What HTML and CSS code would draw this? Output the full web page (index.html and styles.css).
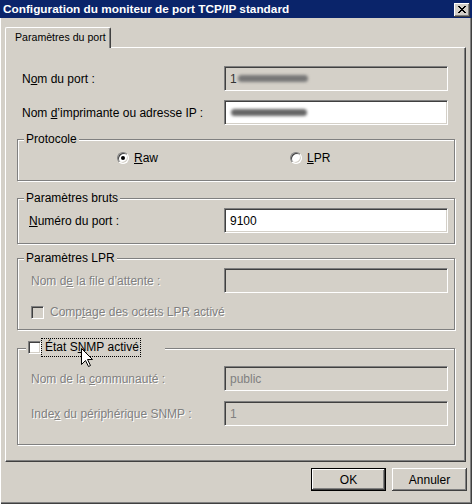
FILE: index.html
```html
<!DOCTYPE html>
<html lang="fr">
<head>
<meta charset="utf-8">
<title>Configuration du moniteur de port TCP/IP standard</title>
<link rel="stylesheet" href="styles.css">
</head>
<body>
<div class="window">
  <div class="titlebar">
    <span class="title">Configuration du moniteur de port TCP/IP standard</span>
    <span class="close">
      <svg width="8" height="7" viewBox="0 0 8 7" shape-rendering="crispEdges">
        <rect x="0" y="0" width="2" height="1"/><rect x="6" y="0" width="2" height="1"/>
        <rect x="1" y="1" width="2" height="1"/><rect x="5" y="1" width="2" height="1"/>
        <rect x="2" y="2" width="4" height="1"/>
        <rect x="3" y="3" width="2" height="1"/>
        <rect x="2" y="4" width="4" height="1"/>
        <rect x="1" y="5" width="2" height="1"/><rect x="5" y="5" width="2" height="1"/>
        <rect x="0" y="6" width="2" height="1"/><rect x="6" y="6" width="2" height="1"/>
      </svg>
    </span>
  </div>
  <div class="client">
    <div class="tabs"><div class="tab">Paramètres du port</div></div>
    <div class="panel">
      <div class="prow r1">
        <span class="lbl">N<u>o</u>m du port :</span>
        <div class="field off"><span class="val dark">1</span><span class="blur"></span></div>
      </div>
      <div class="prow r2">
        <span class="lbl">Nom <u>d</u>’imprimante ou adresse IP :</span>
        <div class="field"><span class="blur wide"></span></div>
      </div>

      <div class="group g-proto">
        <span class="cap">Protocole</span>
        <div class="radios">
          <div class="opt raw"><span class="radio on"></span><span><u>R</u>aw</span></div>
          <div class="opt"><span class="radio"></span><span><u>L</u>PR</span></div>
        </div>
      </div>

      <div class="group g-bruts">
        <span class="cap">Paramètres bruts</span>
        <div class="grow gb">
          <span class="lbl"><u>N</u>uméro du port :</span>
          <div class="field"><span class="val">9100</span></div>
        </div>
      </div>

      <div class="group g-lpr">
        <span class="cap">Paramètres LPR</span>
        <div class="grow gl">
          <span class="lbl dis">Nom d<u>e</u> la file d’attente :</span>
          <div class="field off"></div>
        </div>
        <div class="chkrow">
          <span class="chk off"></span><span class="dis">Comp<u>t</u>age des octets LPR activé</span>
        </div>
      </div>

      <div class="group g-snmp">
        <div class="cap snmpcap">
          <span class="chk"></span><span class="focus">État S<u>N</u>MP activé</span>
        </div>
        <div class="grow gs1">
          <span class="lbl dis">Nom de la <u>c</u>ommunauté :</span>
          <div class="field off"><span class="val">public</span></div>
        </div>
        <div class="grow gs2">
          <span class="lbl dis">Inde<u>x</u> du périphérique SNMP :</span>
          <div class="field off"><span class="val">1</span></div>
        </div>
      </div>
    </div>
    <div class="buttons">
      <button class="btn default">OK</button>
      <button class="btn">Annuler</button>
    </div>
  </div>
  <svg class="cursor" width="13" height="20" viewBox="0 0 13 20">
    <path d="M0.5 0.5 L0.5 16.5 L4.5 12.5 L7.5 18.5 L9.5 17.5 L6.5 11.5 L11.5 11.5 Z" fill="#fff" stroke="#000" stroke-width="1" stroke-linejoin="miter"/>
  </svg>
</div>
</body>
</html>
```
FILE: styles.css
```css
* { box-sizing: border-box; }
html, body { margin: 0; padding: 0; }
body {
  font-family: "Liberation Sans", Arial, sans-serif;
  font-size: 12px;
  color: #000;
  background: #d4d0c8;
}
u { text-decoration: underline; text-underline-offset: 1px; }

.window {
  position: relative;
  width: 472px;
  height: 504px;
  background: #d4d0c8;
  display: flex;
  flex-direction: column;
  overflow: hidden;
  box-shadow: inset 1px 0 #ffffff, inset -1px -1px #404040, inset -2px -2px #808080;
}

.titlebar {
  flex: none;
  height: 18px;
  background: #0a246a;
  color: #fff;
  display: flex;
  justify-content: space-between;
  align-items: flex-start;
}
.title {
  font-weight: bold;
  font-size: 11.8px;
  line-height: 18px;
  padding-left: 3px;
  white-space: nowrap;
}
.close {
  width: 16px;
  height: 14px;
  margin: 3px 2px 0 0;
  background: #d4d0c8;
  box-shadow: inset -1px -1px #404040, inset 1px 1px #ffffff, inset -2px -2px #808080;
  display: flex;
  align-items: center;
  justify-content: center;
  padding: 0 0 1px 0;
}
.close svg { display: block; fill: #000; }

.client {
  flex: 1;
  display: flex;
  flex-direction: column;
  padding: 9px 0 0 5px;
}
.tabs { height: 20px; display: flex; }
.tab {
  position: relative;
  z-index: 1;
  width: 106px;
  height: 21px;
  margin-bottom: -1px;
  background: #d4d0c8;
  border-top: 1px solid #fff;
  border-left: 1px solid #fff;
  border-right: 1px solid #404040;
  border-top-left-radius: 2px;
  border-top-right-radius: 2px;
  box-shadow: inset -1px 0 #808080;
  padding-left: 9px;
  font-size: 10.6px;
  line-height: 18px;
  white-space: nowrap;
}

.panel {
  width: 461px;
  height: 415px;
  border-top: 1px solid #fff;
  border-left: 1px solid #fff;
  border-right: 1px solid #404040;
  border-bottom: 1px solid #404040;
  box-shadow: inset -1px -1px #808080;
  display: flex;
  flex-direction: column;
}

.prow, .grow {
  display: flex;
  align-items: center;
  justify-content: space-between;
}
.prow { margin: 0 17px 0 16px; }
.prow.r1 { margin-top: 18px; }
.prow.r2 { margin-top: 9px; }
.lbl { white-space: nowrap; }

.field {
  flex: none;
  width: 224px;
  height: 25px;
  border: 1px solid;
  border-color: #808080 #fff #fff #808080;
  box-shadow: inset 1px 1px #404040, inset -1px -1px #d4d0c8;
  background: #fff;
  display: flex;
  align-items: center;
  padding-left: 5px;
}
.field.off { background: #d4d0c8; color: #808080; }
.val.dark { color: #333; }
.blur {
  display: block;
  width: 70px;
  height: 7px;
  margin-left: 1px;
  border-radius: 4px;
  background: #777;
  filter: blur(1.6px);
}
.blur.wide { width: 76px; margin-left: 1px; background: #666; }

.dis { color: #808080; text-shadow: 1px 1px 0 #fff; }

.group {
  position: relative;
  margin-left: 11px;
  width: 438px;
  border: 1px solid #808080;
  box-shadow: inset 1px 1px #fff, 1px 1px #fff;
  flex: none;
}
.cap {
  position: absolute;
  left: 6px;
  top: -7px;
  padding: 0 2px;
  background: #d4d0c8;
  line-height: 13px;
  white-space: nowrap;
}

.g-proto { margin-top: 14px; height: 42px; }
.radios {
  display: flex;
  align-items: center;
  height: 12px;
  margin: 12px 0 0 99px;
}
.opt { display: flex; align-items: center; line-height: 13px; }
.opt.raw { width: 173px; }
.radio {
  position: relative;
  width: 12px;
  height: 12px;
  margin-right: 5px;
  border-radius: 50%;
  border: 1px solid;
  border-color: #808080 #fff #fff #808080;
  box-shadow: inset 1px 1px #404040, inset -1px -1px #d4d0c8;
  background: #fff;
  flex: none;
}
.radio.on::after {
  content: "";
  position: absolute;
  left: 3px;
  top: 3px;
  width: 4px;
  height: 4px;
  border-radius: 50%;
  background: #000;
}

.g-bruts { margin-top: 17px; height: 46px; }
.gb { margin: 9px 6px 0 11px; }

.g-lpr { margin-top: 14px; height: 72px; }
.gl { margin: 9px 6px 0 13px; }
.chkrow {
  display: flex;
  align-items: center;
  margin: 13px 0 0 13px;
  height: 13px;
  line-height: 13px;
}
.chk {
  flex: none;
  width: 13px;
  height: 13px;
  border: 1px solid;
  border-color: #808080 #fff #fff #808080;
  box-shadow: inset 1px 1px #404040, inset -1px -1px #d4d0c8;
  background: #fff;
}
.chk.off { background: #d4d0c8; }
.chkrow .chk { margin-right: 6px; }

.g-snmp { margin-top: 18px; height: 97px; }
.snmpcap {
  top: -11px;
  left: 8px;
  width: 139px;
  height: 19px;
  display: flex;
  align-items: center;
  padding: 0 0 0 2px;
}
.focus {
  border: 1px dotted #000;
  padding: 0 1px 0 3px;
  line-height: 17px;
  height: 19px;
  white-space: nowrap;
}
.gs1 { margin: 17px 6px 0 13px; }
.gs2 { margin: 10px 6px 0 13px; }

.buttons {
  width: 462px;
  display: flex;
  justify-content: flex-end;
  gap: 6px;
  margin-top: 6px;
}
.btn {
  width: 75px;
  height: 23px;
  padding: 0;
  border: none;
  font-family: inherit;
  font-size: 12px;
  color: #000;
  background: #d4d0c8;
  box-shadow: inset -1px -1px #404040, inset 1px 1px #fff, inset -2px -2px #808080;
}
.btn.default {
  box-shadow: inset 0 0 0 1px #000, inset -2px -2px #404040, inset 2px 2px #fff, inset -3px -3px #808080;
}

.cursor {
  position: absolute;
  left: 81px;
  top: 348px;
  pointer-events: none;
}
```
